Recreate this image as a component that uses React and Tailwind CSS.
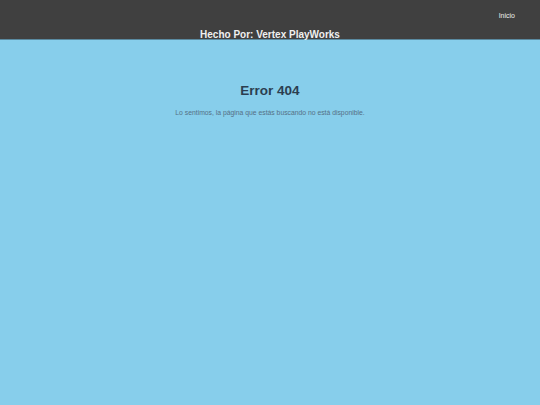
export default function App() {
  return (
    <div className="min-h-screen h-[405px] bg-[#87ceeb] font-['Liberation_Sans',Arial,sans-serif]">
      <header className="h-[40px] bg-[#404040] border-b border-[#5a8aa0] relative">
        <nav className="absolute right-[25px] top-[11px] text-[7px] leading-[10px]">
          <a className="block text-[#eeeeee]">Inicio</a>
        </nav>
        <div className="absolute left-0 right-0 top-[28px] text-center text-[10px] font-bold text-[#f0f0f0] leading-[13px]">
          Hecho Por: Vertex PlayWorks
        </div>
      </header>
      <main className="text-center pt-[42px]">
        <h1 className="text-[13.5px] font-bold text-[#2c3e50] leading-[17px]">Error 404</h1>
        <p className="mt-[9px] text-[6.8px] text-[#557085] leading-[9px]">
          Lo sentimos, la página que estás buscando no está disponible.
        </p>
      </main>
    </div>
  );
}
